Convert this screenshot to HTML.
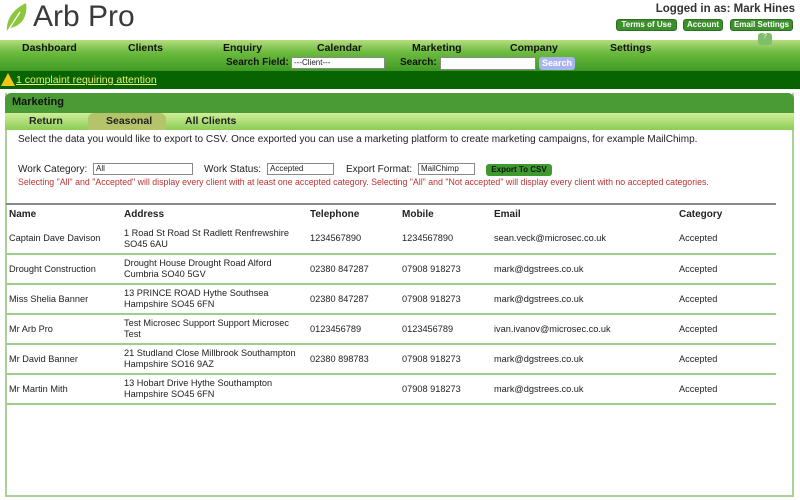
<!DOCTYPE html>
<html><head><style>
*{margin:0;padding:0;box-sizing:border-box}
body{width:800px;height:500px;overflow:hidden;background:#fff;font-family:"Liberation Sans",Arial,sans-serif;position:relative;font-size:11px;color:#222}
.a{position:absolute;white-space:nowrap}
.nav{position:absolute;left:0;top:40px;width:800px;height:31px;background:linear-gradient(#b5dc7f,#6cbb3e 40%,#3f9a24)}
.nav b{position:absolute;top:2px;font-size:10.5px;color:#111}
.btn{position:absolute;top:19px;height:12px;background:#3d8f2d;border:1px solid #2b6f1f;border-radius:3px;color:#fff;font-size:8px;font-weight:bold;line-height:10px;text-align:center;overflow:hidden;white-space:nowrap}
.alert{position:absolute;left:0;top:71px;width:800px;height:18px;background:#076400}
.panel{position:absolute;left:5px;top:93px;width:789px;height:404px;border:2px solid #a8d197;border-top:none;background:#fff}
.ph{position:absolute;left:5px;top:93px;width:789px;height:20px;background:#4a9a35;border-radius:6px 6px 0 0}
.sub{position:absolute;left:5px;top:113px;width:789px;height:17px;background:linear-gradient(#cfee99,#8ccc55)}
table{position:absolute;left:6px;top:203px;width:770px;border-collapse:collapse;border-top:2px solid #888;table-layout:fixed}
td,th{text-align:left;font-size:9.2px;padding:0 3px;vertical-align:middle;line-height:11px;white-space:nowrap;overflow:hidden}
th{height:20px;font-size:10px}
td{height:30px;border-bottom:2px solid #9ccf8a}
.s{position:absolute;height:12px;border:1px solid #888;font-size:8px;background:#fff;padding-left:2px;line-height:10px;white-space:nowrap;overflow:hidden}
</style></head><body>
<svg class="a" style="left:4px;top:2px" width="26" height="32" viewBox="0 0 26 32"><path d="M3 30 C2 18 8 8 22 1 C24 14 18 24 6 26 Z" fill="#8cc63f"/><path d="M3 30 L16 10" stroke="#fff" stroke-width="1.2"/></svg>
<div class="a" style="left:33px;top:0px;font-size:30px;color:#3a3a3a">Arb Pro</div>
<div class="a" style="right:5px;top:3px;font-size:11.5px;font-weight:bold;color:#333">Logged in as: Mark Hines</div>
<div class="nav">
<b style="left:22px">Dashboard</b><b style="left:128px">Clients</b><b style="left:223px">Enquiry</b><b style="left:317px">Calendar</b><b style="left:412px">Marketing</b><b style="left:510px">Company</b><b style="left:610px">Settings</b>
<b style="left:226px;top:17px;font-size:10px">Search Field:</b>
<div class="s" style="left:291px;top:17px;width:94px;height:12px">---Client---</div>
<b style="left:400px;top:17px;font-size:10px">Search:</b>
<div class="s" style="left:440px;top:17px;width:96px;height:13px"></div>
<div class="a" style="left:539px;top:17px;width:36px;height:13px;background:#a8b4f0;border-radius:3px;color:#fff;font-size:9px;font-weight:bold;text-align:center;line-height:13px">Search</div>
</div>
<div class="btn" style="left:616px;width:61px">Terms of Use</div>
<div class="btn" style="left:683px;width:40px">Account</div>
<div class="btn" style="left:730px;width:63px">Email Settings</div>
<div class="a" style="left:758px;top:33px;width:14px;height:12px;background:#7fbf6a;border-radius:3px;font-size:7px;color:#fff;text-align:center">?</div>
<div class="alert"><div class="a" style="left:1px;top:2px;width:0;height:0;border-left:7px solid transparent;border-right:7px solid transparent;border-bottom:13px solid #f3c61a"></div><div class="a" style="left:16px;top:3px;font-size:10.5px;color:#e9f07a;text-decoration:underline">1 complaint requiring attention</div></div>
<div class="panel"></div>
<div class="ph"><div class="a" style="left:7px;top:3px;font-size:11px;font-weight:bold;color:#111">Marketing</div></div>
<div class="sub">
<b class="a" style="left:24px;top:2px;font-size:10.5px">Return</b>
<div class="a" style="left:83px;top:0;width:78px;height:17px;background:#b4c46a;border-radius:6px 6px 0 0"></div>
<b class="a" style="left:101px;top:2px;font-size:10.5px">Seasonal</b>
<b class="a" style="left:180px;top:2px;font-size:10.5px">All Clients</b>
</div>
<div class="a" style="left:18px;top:134px;font-size:10px">Select the data you would like to export to CSV. Once exported you can use a marketing platform to create marketing campaigns, for example MailChimp.</div>
<div class="a" style="left:18px;top:164px;font-size:10px">Work Category:</div>
<div class="s" style="left:93px;top:163px;width:100px">All</div>
<div class="a" style="left:204px;top:164px;font-size:10px">Work Status:</div>
<div class="s" style="left:267px;top:163px;width:67px">Accepted</div>
<div class="a" style="left:346px;top:164px;font-size:10px">Export Format:</div>
<div class="s" style="left:418px;top:163px;width:57px">MailChimp</div>
<div class="a" style="left:486px;top:164px;width:66px;height:12px;background:#3d9a2d;border-radius:3px;font-size:8px;font-weight:bold;text-align:center;line-height:12px;color:#111">Export To CSV</div>
<div class="a" style="left:18px;top:177px;font-size:8.8px;color:#b33">Selecting "All" and "Accepted" will display every client with at least one accepted category. Selecting "All" and "Not accepted" will display every client with no accepted categories.</div>
<table>
<colgroup><col style="width:115px"><col style="width:186px"><col style="width:92px"><col style="width:92px"><col style="width:185px"><col></colgroup>
<tr><th>Name</th><th>Address</th><th>Telephone</th><th>Mobile</th><th>Email</th><th>Category</th></tr>
<tr><td>Captain Dave Davison</td><td>1 Road St Road St Radlett Renfrewshire<br>SO45 6AU</td><td>1234567890</td><td>1234567890</td><td>sean.veck@microsec.co.uk</td><td>Accepted</td></tr>
<tr><td>Drought Construction</td><td>Drought House Drought Road Alford<br>Cumbria SO40 5GV</td><td>02380 847287</td><td>07908 918273</td><td>mark@dgstrees.co.uk</td><td>Accepted</td></tr>
<tr><td>Miss Shelia Banner</td><td>13 PRINCE ROAD Hythe Southsea<br>Hampshire SO45 6FN</td><td>02380 847287</td><td>07908 918273</td><td>mark@dgstrees.co.uk</td><td>Accepted</td></tr>
<tr><td>Mr Arb Pro</td><td>Test Microsec Support Support Microsec<br>Test</td><td>0123456789</td><td>0123456789</td><td>ivan.ivanov@microsec.co.uk</td><td>Accepted</td></tr>
<tr><td>Mr David Banner</td><td>21 Studland Close Millbrook Southampton<br>Hampshire SO16 9AZ</td><td>02380 898783</td><td>07908 918273</td><td>mark@dgstrees.co.uk</td><td>Accepted</td></tr>
<tr><td>Mr Martin Mith</td><td>13 Hobart Drive Hythe Southampton<br>Hampshire SO45 6FN</td><td></td><td>07908 918273</td><td>mark@dgstrees.co.uk</td><td>Accepted</td></tr>
</table>
</body></html>
